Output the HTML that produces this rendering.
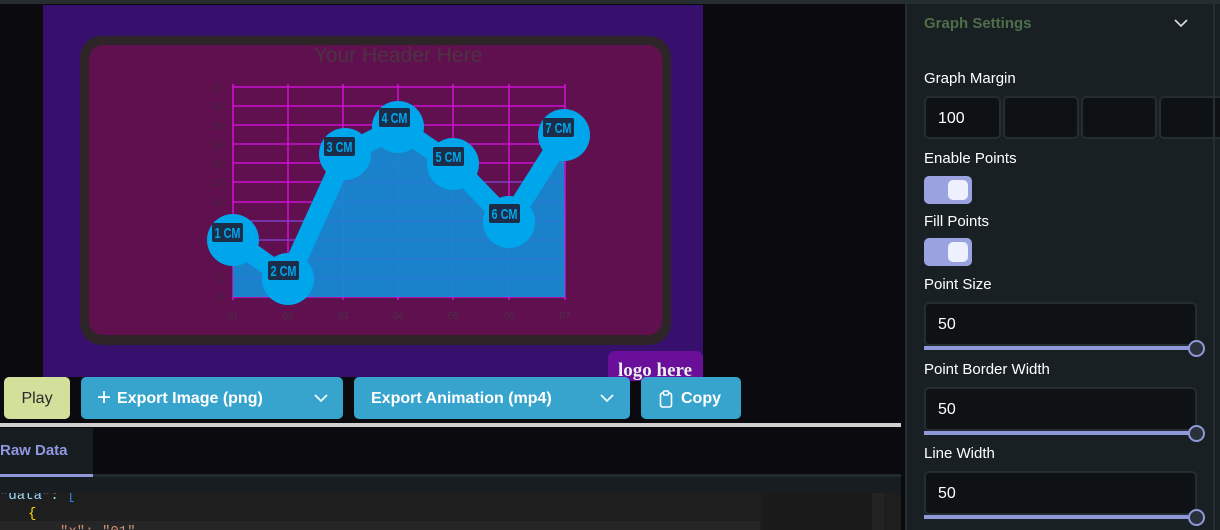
<!DOCTYPE html>
<html><head><style>
*{margin:0;padding:0;box-sizing:border-box}
html,body{width:1220px;height:530px;overflow:hidden}
body{background:#0a0a0f;font-family:"Liberation Sans",sans-serif;position:relative}
.abs{position:absolute}
.btn{position:absolute;top:377px;height:42px;border-radius:5px;background:#36a4cc;color:#fff;font-weight:bold;font-size:16px;display:flex;align-items:center;padding-top:2px}
.lbl{position:absolute;left:924px;color:#fff;font-size:15px}
.inp{position:absolute;background:#0e1215;border:2px solid #252d31;border-radius:5px;color:#fff;font-size:16px;display:flex;align-items:center;padding-left:12px;padding-top:2px}
.tog{position:absolute;left:924px;width:48px;height:28px;border-radius:5px;background:#9aa2e0}
.tog::after{content:"";position:absolute;right:4px;top:4px;width:20px;height:20px;border-radius:5px;background:#eef0ff}
.sl{position:absolute;left:924px;width:272px;height:4px;background:#8f98d8}
.knob{position:absolute;left:1188px;width:17px;height:17px;border-radius:50%;border:2px solid #8f98d8;background:#29323a}
</style></head><body>
<div class="abs" style="left:0;top:0;width:1220px;height:4px;background:#262d31"></div>
<svg class="abs" style="left:0;top:0" width="905" height="425">
<rect x="43" y="5" width="660" height="372" fill="#37106d"/>
<rect x="80" y="36" width="591" height="309" rx="22" fill="#2d2528"/>
<rect x="89" y="45" width="573" height="290" rx="14" fill="#61104f"/>
<text x="398" y="62" text-anchor="middle" font-family="Liberation Sans" font-size="21" fill="#4a3440">Your Header Here</text>
<g stroke="#e010e6" stroke-width="1.3">
<line x1="233" y1="87" x2="565" y2="87"/><line x1="233" y1="106" x2="565" y2="106"/><line x1="233" y1="125" x2="565" y2="125"/><line x1="233" y1="144" x2="565" y2="144"/><line x1="233" y1="163" x2="565" y2="163"/><line x1="233" y1="182" x2="565" y2="182"/><line x1="233" y1="202" x2="565" y2="202"/><line x1="233" y1="221" x2="565" y2="221"/><line x1="233" y1="240" x2="565" y2="240"/><line x1="233" y1="259" x2="565" y2="259"/><line x1="233" y1="278" x2="565" y2="278"/><line x1="233" y1="297" x2="565" y2="297"/>
<line x1="233" y1="84" x2="233" y2="300"/><line x1="288" y1="84" x2="288" y2="300"/><line x1="343" y1="84" x2="343" y2="300"/><line x1="398" y1="84" x2="398" y2="300"/><line x1="453" y1="84" x2="453" y2="300"/><line x1="509" y1="84" x2="509" y2="300"/><line x1="565" y1="84" x2="565" y2="300"/>
</g>
<g font-family="Liberation Sans" font-size="10" fill="#3a2535" text-anchor="end">
<text x="223" y="91">22</text><text x="223" y="110">20</text><text x="223" y="129">18</text><text x="223" y="148">16</text><text x="223" y="167">14</text><text x="223" y="186">12</text><text x="223" y="206">10</text><text x="223" y="282">2</text><text x="223" y="301">0</text>
</g>
<g font-family="Liberation Sans" font-size="10" fill="#4a3048" text-anchor="middle">
<text x="233" y="319">01</text><text x="288" y="319">02</text><text x="343" y="319">03</text><text x="398" y="319">04</text><text x="453" y="319">05</text><text x="509" y="319">06</text><text x="565" y="319">07</text>
</g>
<polygon points="233,240 288,279 345,154 398,127 453,164 509,222 564,135 565,297 233,297" fill="#1589d2" opacity="0.95"/>
<g stroke="#3a6ad8" stroke-width="1" opacity="0.7">
<line x1="233" y1="259" x2="565" y2="259"/><line x1="233" y1="278" x2="565" y2="278"/><line x1="233" y1="240" x2="565" y2="240"/><line x1="233" y1="221" x2="565" y2="221"/><line x1="343" y1="202" x2="565" y2="202"/><line x1="343" y1="182" x2="565" y2="182"/>
</g>
<polyline points="233,240 288,279 345,154 398,127 453,164 509,222 564,135" fill="none" stroke="#00a6ec" stroke-width="20" stroke-linejoin="round"/>
<g fill="#00a6ec">
<circle cx="233" cy="240" r="26"/><circle cx="288" cy="279" r="26"/><circle cx="345" cy="154" r="26"/><circle cx="398" cy="127" r="26"/><circle cx="453" cy="164" r="26"/><circle cx="509" cy="222" r="26"/><circle cx="564" cy="135" r="26"/>
</g>
<g font-family="Liberation Sans" font-weight="bold" font-size="15" fill="#00a6ec" text-anchor="middle">
<rect x="212" y="223" width="31" height="19" rx="2" fill="#1c2d4a"/><text x="227.5" y="238" textLength="26" lengthAdjust="spacingAndGlyphs">1 CM</text>
<rect x="268" y="261" width="31" height="19" rx="2" fill="#1c2d4a"/><text x="283.5" y="276" textLength="26" lengthAdjust="spacingAndGlyphs">2 CM</text>
<rect x="324" y="137" width="31" height="19" rx="2" fill="#1c2d4a"/><text x="339.5" y="152" textLength="26" lengthAdjust="spacingAndGlyphs">3 CM</text>
<rect x="379" y="108" width="31" height="19" rx="2" fill="#1c2d4a"/><text x="394.5" y="123" textLength="26" lengthAdjust="spacingAndGlyphs">4 CM</text>
<rect x="433" y="147" width="31" height="19" rx="2" fill="#1c2d4a"/><text x="448.5" y="162" textLength="26" lengthAdjust="spacingAndGlyphs">5 CM</text>
<rect x="489" y="204" width="31" height="19" rx="2" fill="#1c2d4a"/><text x="504.5" y="219" textLength="26" lengthAdjust="spacingAndGlyphs">6 CM</text>
<rect x="543" y="118" width="31" height="19" rx="2" fill="#1c2d4a"/><text x="558.5" y="133" textLength="26" lengthAdjust="spacingAndGlyphs">7 CM</text>
</g>
<rect x="608" y="351" width="95" height="30" rx="7" fill="#6a0f9a"/>
<text x="655" y="376" text-anchor="middle" font-family="Liberation Serif" font-weight="bold" font-size="19" fill="#eee">logo here</text>
</svg>
<div class="btn" style="left:4px;width:66px;background:#d3e09b;color:#2a2a2a;font-weight:normal;justify-content:center">Play</div>
<div class="btn" style="left:81px;width:262px"><span style="font-size:24px;font-weight:normal;margin:0 6px 2px 16px">+</span>Export Image (png)<svg class="abs" style="left:232px;top:15px" width="16" height="12"><path d="M2 3l6 6 6-6" fill="none" stroke="#fff" stroke-width="1.6"/></svg></div>
<div class="btn" style="left:354px;width:276px;padding-left:17px">Export Animation (mp4)<svg class="abs" style="left:245px;top:15px" width="16" height="12"><path d="M2 3l6 6 6-6" fill="none" stroke="#fff" stroke-width="1.6"/></svg></div>
<div class="btn" style="left:641px;width:100px;padding-left:18px"><svg width="14" height="18" style="margin-right:8px"><rect x="1.5" y="3" width="11" height="14" rx="2" fill="none" stroke="#fff" stroke-width="1.6"/><rect x="4.5" y="1" width="5" height="4" rx="1" fill="#36a4cc" stroke="#fff" stroke-width="1.5"/></svg>Copy</div>
<div class="abs" style="left:0;top:423px;width:901px;height:4px;background:#cfcfcf"></div>
<div class="abs" style="left:0;top:428px;width:93px;height:48px;background:#161c20;color:#8f98e0;font-weight:bold;font-size:15px;line-height:46px">Raw Data</div>
<div class="abs" style="left:0;top:474px;width:901px;height:3px;background:#232b30"></div>
<div class="abs" style="left:0;top:474px;width:93px;height:3px;background:#8f98d8"></div>
<div class="abs" style="left:0;top:477px;width:901px;height:16px;background:#171d21"></div>
<div class="abs" style="left:0;top:493px;width:901px;height:37px;overflow:hidden;background:#1e1e1e;font-family:'Liberation Mono',monospace;font-size:14px;line-height:18px">
<div style="position:absolute;left:0;top:-6px;color:#9cdcfe">"data": <span style="color:#2a80e0">[</span></div>
<div style="position:absolute;left:28px;top:12px;color:#ffd700">{</div>
<div style="position:absolute;left:0;top:28px;width:760px;height:9px;background:#262626"></div>
<div style="position:absolute;left:60px;top:30px;color:#ce9178">"x": "01"</div>
<div style="position:absolute;left:762px;top:0;width:122px;height:37px;background:#1a1a1a"></div>
<div style="position:absolute;left:872px;top:0;width:12px;height:37px;background:#232323"></div>
</div>
<div class="abs" style="left:905px;top:4px;width:315px;height:526px;background:#192024;border-left:2px solid #262e33"></div>
<div class="abs" style="left:924px;top:15px;color:#4e6e49;font-weight:bold;font-size:15px">Graph Settings</div>
<svg class="abs" style="left:1173px;top:17px" width="16" height="12"><path d="M2 3l6 6 6-6" fill="none" stroke="#ddd" stroke-width="1.6"/></svg>
<div class="lbl" style="top:70px">Graph Margin</div>
<div class="inp" style="left:924px;top:96px;width:77px;height:43px">100</div>
<div class="inp" style="left:1003px;top:96px;width:76px;height:43px"></div>
<div class="inp" style="left:1081px;top:96px;width:76px;height:43px"></div>
<div class="inp" style="left:1159px;top:96px;width:70px;height:43px"></div>
<div class="lbl" style="top:150px">Enable Points</div>
<div class="tog" style="top:176px"></div>
<div class="lbl" style="top:213px">Fill Points</div>
<div class="tog" style="top:238px"></div>
<div class="lbl" style="top:276px">Point Size</div>
<div class="inp" style="left:924px;top:302px;width:273px;height:44px">50</div>
<div class="sl" style="top:346px"></div><div class="knob" style="top:340px"></div>
<div class="lbl" style="top:361px">Point Border Width</div>
<div class="inp" style="left:924px;top:387px;width:273px;height:44px">50</div>
<div class="sl" style="top:431px"></div><div class="knob" style="top:425px"></div>
<div class="lbl" style="top:445px">Line Width</div>
<div class="inp" style="left:924px;top:471px;width:273px;height:44px">50</div>
<div class="sl" style="top:515px"></div><div class="knob" style="top:509px"></div>
<div class="abs" style="left:1213px;top:4px;width:2px;height:526px;background:#262e33"></div>
</body></html>
